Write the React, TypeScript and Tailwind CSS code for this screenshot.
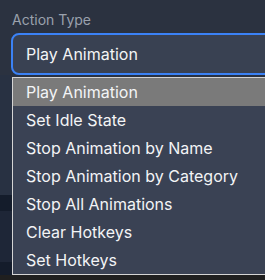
import React from "react";

const OPTIONS = [
  "Play Animation",
  "Set Idle State",
  "Stop Animation by Name",
  "Stop Animation by Category",
  "Stop All Animations",
  "Clear Hotkeys",
  "Set Hotkeys",
];

export default function App() {
  const selected = OPTIONS[0];

  return (
    <div
      className="relative h-[280px] w-[265px] overflow-hidden bg-[#2b3240] text-[#f3f4f6]"
      style={{ fontFamily: "Inter, 'Noto Sans', sans-serif" }}
    >
      <div className="pl-3 pt-[10px] text-sm leading-5 text-[#9aa1ad]">Action Type</div>
      <div className="mt-[3px] pl-[11px]">
        <div className="flex h-[42px] w-[300px] items-center rounded-lg border-2 border-[#3b82f6] bg-[#394152] pl-[13px] text-base">
          {selected}
        </div>
      </div>

      {/* content underneath the open list */}
      <div className="h-[120px] bg-[#283142]" />
      <div className="h-4 bg-[#141c2b]" />
      <div className="h-[51px] bg-[#1e2637]" />
      <div className="h-[13px] bg-[#141c2b]" />
      <div className="h-2 bg-[#1f1f1f]" />

      <ul className="absolute left-3 top-[77px] w-[300px] border border-[#d4d4d4] bg-[#3a4254]">
        {OPTIONS.map((option) => (
          <li
            key={option}
            className={`flex h-7 items-center pl-[13px] text-base ${
              option === selected ? "bg-[#7a7a7a]" : ""
            }`}
          >
            {option}
          </li>
        ))}
      </ul>
    </div>
  );
}
